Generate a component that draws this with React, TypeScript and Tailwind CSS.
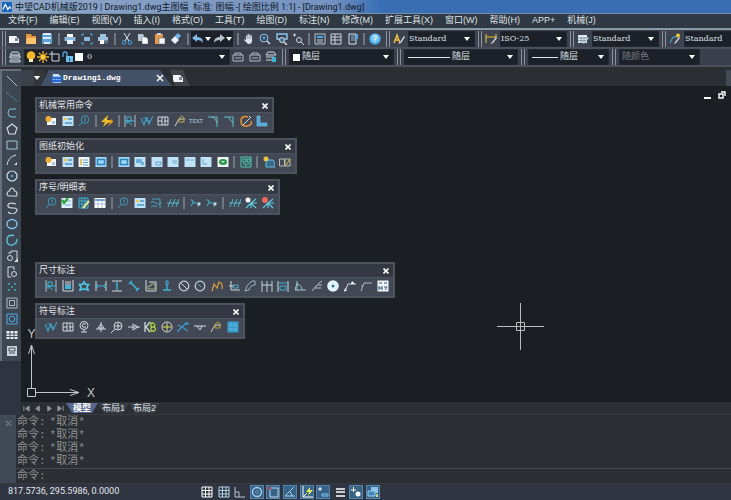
import React from "react";

const W = "#d3d8de";
const C = "#3fb4d6";
const B = "#4fa8e8";
const Y = "#f2c53a";
const L = "#bfe2f8";

const sheet = (inner: React.ReactNode, fill = L) => (
  <>
    <rect x="0.5" y="1" width="11" height="10" fill={fill} />
    {inner}
  </>
);

const icons: Record<string, React.ReactNode> = {
  newFile: (<><path d="M1 3h7l3 3v4H1z" fill="#f2f4f6" /><path d="M7 5h3v3H7z" fill="#7c8694" /></>),
  open: (<><path d="M1 1h5l1 2h4v8H1z" fill="#e79a3c" /><path d="M2 5h9v6H1z" fill="#fbc56f" /></>),
  save: (<><path d="M1 1h10v10H1z" fill="#5e9fd8" /><path d="M2 5h8M2 1h8" stroke="#d9ebf8" strokeWidth="2" /><path d="M3 9h6v2H3z" fill="#d9ebf8" /></>),
  print: (<><path d="M3 1h6v3H3z" fill="#fff" /><path d="M0.500 4h11v4h-11z" fill="#8cb9df" /><path d="M3 7h6v4H3z" fill="#e7f2fb" /></>),
  preview: (<><path d="M1 3V1h2M9 1h2v2M11 9v2H9M3 11H1V9" stroke={B} /><path d="M3 4h6v4H3z" fill="#8cb9df" /></>),
  plot: (<><path d="M3 1h6v3H3zM1 4h10v4H1z" fill="#9cc0de" /><path d="M3 7h4v4H3z" fill="#fff" /><circle cx="9" cy="9" r="2" fill="#5d7487" /></>),
  cut: (<><path d="M3 0l5 8M9 0L4 8" stroke="#d7e6f3" /><circle cx="3" cy="9.500" r="1.800" stroke={B} /><circle cx="9" cy="9.500" r="1.800" stroke={B} /></>),
  copy: (<><path d="M1 1h5l1 2v5H1z" fill="#b9c8d8" /><path d="M5 4h4l2 2v5H5z" fill="#fff" stroke="#52616f" strokeWidth=".5" /></>),
  paste: (<><path d="M1 1h8v10H1z" fill="#e29745" /><path d="M3 0h4v2H3z" fill="#ccd" /><path d="M5 5h6v6H5z" fill="#f3f6fa" stroke="#52616f" strokeWidth=".5" /></>),
  brush: (<><path d="M8 0l3 3-3 3-3-3z" fill="#72b4ef" /><path d="M5 3l4 4-4 4-4-4z" fill="#e6f0fa" /></>),
  undo: (<path d="M0 5l5-4v3c4 0 6 2 6 6-1-2-3-3-6-3v2z" fill="#7fb9e6" />),
  redo: (<path d="M12 5L7 1v3C3 4 1 6 1 10c1-2 3-3 6-3v2z" fill="#b8c0ca" />),
  hand: (<path d="M3 7V3q1-1 1.500 0v3V1.500q1-1 1.500 0V6 2q1-1 1.500 0v4-3q1-1 1.500 0v5q0 3-3 3H5L1 7q0-1 2 0z" fill="#dfe5ec" stroke="#8a96a4" strokeWidth=".4" />),
  zoomRt: (<><circle cx="5" cy="5" r="4" stroke="#8ac4ef" /><path d="M8 8l3 3" stroke={W} strokeWidth="1.500" /><path d="M5 3v4M3 5h4" stroke={B} /></>),
  zoomWin: (<><path d="M1 1h10v5H1z" stroke="#8ac4ef" strokeWidth="1.500" /><circle cx="6" cy="7" r="2.500" stroke={W} fill="#3d6e98" /><path d="M8 9l3 3" stroke={W} strokeWidth="1.500" /></>),
  zoomPrev: (<><circle cx="7" cy="7" r="2.500" stroke={W} /><path d="M9 9l3 3M1 2h3M2.500 0.500v3" stroke={W} /></>),
  props: (<><path d="M1 1h10v10H1z" stroke="#b7c5d3" /><path d="M3 3h6v2H3z" fill={B} /><path d="M3 7h6M3 9h6" stroke="#b7c5d3" /></>),
  design: (<><path d="M1 1h10v10H1zM5 1v10M1 4h10M1 7h10" stroke="#ccd5de" /></>),
  palette: (<><path d="M2 1h7v10H2z" stroke="#d5e3ef" /><path d="M4 3h4M4 5h4M4 7h4" stroke="#7faed4" /><path d="M9 1h2v5H9z" fill={B} /></>),
  help: (<><circle cx="6" cy="6" r="5.800" fill="#49a8e8" /><circle cx="6" cy="5" r="4" fill="#7cc8f5" /><path d="M4.500 4.500q0-1.500 1.500-1.500t1.500 1.300Q7.500 5.500 6 6v1M6 8v1.200" stroke="#fff" /></>),
  textStyle: (<><path d="M1 10l3-8 3 8M2 7h4" stroke={Y} strokeWidth="1.400" /><path d="M11 3l-4 6-2 2 3-1 4-6z" fill={W} /></>),
  dimStyle: (<><path d="M1 1v9M11 1v4M1 4h10" stroke={Y} /><path d="M11 4L7 9l-2 2 3-1 4-5z" fill={W} /></>),
  tableStyle: (<><path d="M1 2h9v8H1z" fill="#dce9f3" /><path d="M1 5h9M1 7.500h9M4 4v6M7 4v6" stroke="#687f91" strokeWidth=".7" /><path d="M12 5L8 10l-2 1 1-2 4-5z" fill="#9ac7e8" /></>),
  leaderStyle: (<><path d="M1 10l3-6h4" stroke={C} /><circle cx="9" cy="2.500" r="2" fill={Y} /><path d="M11 5L7 10l-2 1 1-2 4-5z" fill={W} /></>),
  layers: (<><path d="M3 1h6l2 3H1zM1 5h10v2H1zM1 9h10v2H1z" stroke="#cbd6e0" fill="#4b5665" /></>),
  layerPrev: (<><path d="M1 4h10v6H1z" stroke="#aebbc9" /><path d="M3 4V2h6v2M3 7h6" stroke="#aebbc9" /></>),
  layerState: (<><path d="M3 1h6l2 3H1zM1 6h8M1 9h6" stroke="#cbd6e0" /><path d="M7 6h4v5H7z" fill={C} /></>),
  bulb: (<><circle cx="6" cy="4.500" r="4.300" fill="#f6b52b" /><path d="M4 8h4v3H4z" fill="#fff0bd" /></>),
  sun: (<><path d="M6 0v12M0 6h12M2 2l8 8M10 2l-8 8" stroke="#f4b224" strokeWidth="1.300" /><circle cx="6" cy="6" r="3" fill="#ffcc3f" stroke="#6a5218" strokeWidth=".6" /></>),
  frame: (<><path d="M3 3h7v7H3z" stroke={W} /><path d="M0 3h3V0" stroke={W} /></>),
  lock: (<><path d="M2 6V3q0-2 2-2t2 2v2" stroke={B} strokeWidth="1.300" /><path d="M5 5h7v6H5z" fill="#69c0ee" /><path d="M8 7h1v3H8z" fill="#24435a" /></>),
  line: (<path d="M1 1l10 10" stroke="#a9bccb" />),
  xline: (<path d="M0 1l12 10" stroke="#3f8fa6" strokeDasharray="4 1" />),
  pline: (<path d="M10 2H5Q2 2 2 6t4 4h4" stroke="#7fc9da" />),
  polygon: (<path d="M6 1l5 4-2 6H3L1 5z" stroke={W} strokeWidth="1.200" />),
  rect: (<path d="M1 2h10v8H1z" stroke="#9fc8d6" />),
  arc: (<><path d="M1 11Q2 3 10 1" stroke={W} /><path d="M11 8v3H8z" fill={W} /></>),
  circle: (<><circle cx="6" cy="6" r="5" stroke="#c7e0ec" strokeWidth="1.200" /><circle cx="6" cy="6" r="1.200" fill={C} /></>),
  cloud: (<path d="M3 10Q0 9 1.500 6.500 2 5 3.500 5 4 2 6 2t2.500 3Q11 5 11 8t-3 2z" stroke={W} strokeWidth="1.200" />),
  spline: (<path d="M10 2Q3 0 2 3t5 3 3 4-8 0" stroke={W} strokeWidth="1.200" />),
  ellipse: (<ellipse cx="6" cy="6" rx="5" ry="4.500" stroke="#7fc4ea" strokeWidth="1.400" />),
  ellArc: (<path d="M8 1.500Q1 0 1 6t5 5 5-6" stroke="#5fc1d8" strokeWidth="1.400" />),
  block: (<><path d="M2 3h3V1h6v9" stroke={W} /><circle cx="4" cy="8" r="2.500" stroke={W} /><path d="M12 8v4H8z" fill={W} /></>),
  insert: (<><path d="M2 1h6v3M2 1v10h3" stroke={W} /><circle cx="8" cy="8" r="2.500" stroke={W} /></>),
  point: (<path d="M2 2h2v2H2zM8 2h2v2H8zM5 5h2v2H5zM2 8h2v2H2zM8 8h2v2H8z" fill="#3c9a9e" />),
  hatch: (<><path d="M1 1h10v10H1zM3.500 3.500h5v5h-5z" stroke="#a9b7c4" /></>),
  region: (<><path d="M1 1h10v10H1z" stroke={B} /><circle cx="6" cy="6" r="2.800" stroke={B} /></>),
  table: (<><path d="M0.500 2h11v8h-11z" fill="#edf1f4" /><path d="M0 5h12M0 7.500h12M4 2v8M8 2v8" stroke="#47515f" /></>),
  mtext: (<><path d="M1 1h10v10H1z" fill="#cad4dc" /><path d="M3 3h6v3H3zM3 8h6" stroke="#49545f" /></>),
  sheetNew: (<><path d="M2 3h9v7H2z" fill="#f4f7fb" /><path d="M7 6h3v3H7z" fill="#a4cce8" /><circle cx="3.500" cy="4" r="3" fill="#f0b036" /></>),
  sheetY: sheet(<><path d="M2 3h3v2H2z" fill={Y} /><path d="M6 4h4M3 8h7" stroke="#4a98c7" strokeWidth="1.500" /></>),
  sheetList: sheet(<><path d="M5 4h5M5 6.500h5M5 9h5" stroke="#58a0cc" /><path d="M2 3h2v6H2z" fill="#e4c167" /></>, "#eef5fa"),
  sheetB: sheet(<path d="M2.500 3.500h7v5h-7z" stroke="#2c86bd" strokeWidth="1.500" />, "#9fd6f6"),
  sheetC: sheet(<path d="M2 3h6v4H2zM7 6h3v3H7z" fill="#69b0dc" />),
  sheetD: sheet(<path d="M5 6h5v3H5z" stroke="#5aa3d2" />),
  sheetE: sheet(<path d="M5 5h5M6 7h4" stroke="#70acd2" />),
  sheetF: sheet(<path d="M2 4h4M7 4h3" stroke="#70acd2" />),
  sheetG: sheet(<path d="M3 3v5M3 8h4" stroke="#70acd2" />),
  refresh: (<>{sheet(null, "#eef7f3")}<ellipse cx="6" cy="6" rx="4" ry="3" fill="#299847" /><path d="M4 5h4l-2 2z" fill="#d5eedb" /></>),
  balloon: (<><circle cx="7" cy="4.500" r="3.800" stroke="#3c9bc0" /><path d="M7 2.500v4M4.500 7L1 11" stroke="#3c9bc0" /></>),
  bolt: (<><path d="M7 0L0 7h4l-2 5 8-7H6z" fill="#f6bd28" /><path d="M11 4L6 8h3l-3 4 6-5z" fill="#e39f18" /></>),
  rdim: (<><path d="M1 0v12M11 0v12" stroke={W} strokeWidth=".8" /><path d="M1 6h10M3 9V2h4v4H3l5 4" stroke={C} /></>),
  rough: (<path d="M0 3l3 7 3-8M6 3l2 6 4-8M2 3h4M5 6h5" stroke="#419fc2" strokeWidth="1.200" />),
  fcf: (<path d="M1 2h10v8H1zM5 2v8M1 6h4M8 2v8M7 6h4" stroke={W} />),
  weld: (<><path d="M1 11l4-7h6" stroke={W} /><path d="M5 4q3-6 5 0v3H5z" stroke="#bba938" /></>),
  corner: (<path d="M1 2h9v10M5 2q4 1 5 6" stroke="#67bdd0" />),
  chamfer: (<path d="M1 2h9v10M5 2l5 6" stroke="#67bdd0" />),
  edit: (<><path d="M8 2Q1 0 1 6t6 5 4-5" stroke="#e79532" strokeWidth="1.500" /><path d="M3 10l8-8M9 1l2 2" stroke={W} /></>),
  angleIron: (<path d="M1 1h3v7h7v3H1z" fill="#4eaad8" stroke="#79c9ed" strokeWidth=".6" />),
  assembly: (<path d="M1 1h10v10H1zM3 3h3v3H3zM7 8h3M3 8h3v2M7 3h3v3H7z" stroke="#4dd0b1" />),
  libNew: (<><circle cx="3" cy="3" r="2.500" fill={Y} /><path d="M5 4h5l2 3v4H3V7z" stroke="#69bfe5" fill="#356984" /></>),
  book: (<><path d="M0.500 3h5v7h-5zM6 3h5v7H6z" stroke="#b3bfb5" /><path d="M11 3L7 9" stroke={Y} /></>),
  sheetCheck: (<>{sheet(<path d="M5 4h5M4 8h6" stroke="#6cafdc" />, "#dff0f9")}<path d="M1 3l2 3 4-5" stroke="#2aa83e" strokeWidth="2.500" /></>),
  gridEdit: (<><path d="M1 1h9v10H1zM4 1v10M7 1v10M1 4h9M1 7h9" stroke={C} /><path d="M11 4l-6 7" stroke="#e5ec94" strokeWidth="2" /></>),
  gridWhite: (<>{sheet(<><path d="M1 3h10" stroke="#6e9ed4" strokeWidth="2" /><path d="M4 4v7M8 4v7M1 7h10" stroke="#a7bfda" /></>, "#fff")}</>),
  waves: (<path d="M2 2h8M0 6q3-3 6 0t5-1M1 10q3-3 6 0M10 2v9" stroke="#47a4bd" />),
  hatches: (<path d="M0 6h12M1 10l3-8M5 10l3-8M9 10l3-8" stroke="#55b7ce" />),
  node: (<><path d="M0 3h2l2 3h7M1 9l3-5M8 6v4" stroke="#3fa7bd" strokeWidth="1.200" /><circle cx="9" cy="7" r="1.500" fill={W} /></>),
  spider: (<><path d="M6 6L1 11M6 6l5 5M6 6v5M6 6l5-4M6 6h6" stroke="#5ec8df" strokeWidth="1.200" /><circle cx="3" cy="3" r="2.500" fill="#fff" /></>),
  spiderRed: (<><path d="M6 6L1 11M6 6l5 5M6 6v5M6 6l5-4M6 6h6" stroke="#5ec8df" strokeWidth="1.200" /><circle cx="3" cy="3" r="3" fill="#e76a60" /></>),
  multi: (<><path d="M1 0v11h10V0M3 2h6M3 4h6" stroke={W} /><path d="M3 5h6v4H3z" fill={C} /></>),
  star: (<path d="M6 2l1.500 2.500h3L9 7l1 3-4-1-4 1 1-3-1.500-2.500h3z" stroke="#4cc5ea" strokeWidth="1.700" />),
  hdim: (<><path d="M1 1v10M11 1v10" stroke={W} /><path d="M1 6h10M3 4L1 6l2 2M9 4l2 2-2 2" stroke={C} /></>),
  vdim: (<><path d="M1 1h10M1 11h10" stroke={W} /><path d="M6 2v8" stroke={C} strokeWidth="1.500" /></>),
  adim: (<path d="M1 4l3-3M8 11l3-3M3 3l6 6" stroke={C} strokeWidth="1.600" />),
  stair: (<><path d="M1 0v11h10V2H4" stroke={W} /><path d="M3 9V6h3V4h4v5z" stroke="#a7af83" /></>),
  datumT: (<><path d="M2 10h8M6 5v5" stroke={C} strokeWidth="1.400" /><path d="M5 1h2v4H5z" stroke={C} /></>),
  dia: (<><circle cx="6" cy="6" r="4.800" stroke="#c9d1db" strokeWidth="1.200" /><path d="M3 3l6 6" stroke="#c9d1db" /></>),
  rad: (<><circle cx="6" cy="6" r="4.800" stroke="#c9d1db" strokeWidth="1.200" /><path d="M4 4l3 3" stroke={C} /></>),
  jog: (<path d="M1 11l2-7 3 4 2-6q4 1 3 7" stroke="#dfa044" strokeWidth="1.200" />),
  ord: (<><path d="M3 1v9h9M1 6h5" stroke={W} /><path d="M5 5h5v3H5z" stroke="#58acd0" /></>),
  arcDim: (<path d="M1 11Q2 5 8 1h3v4q-5 0-6 5z" stroke="#93b9c5" />),
  multiH: (<path d="M1 1v11M6 1v11M11 1v11M1 5h10" stroke="#bad5df" />),
  baseDim: (<><path d="M1 1v11M11 1v11" stroke={W} /><path d="M1 3h10M3 6h6v4H3z" stroke={C} /></>),
  ang: (<path d="M3 1v9h9M3 3L1 10h3M3 4q5 1 5 6" stroke="#98c0cd" />),
  leader2: (<path d="M1 11l5-6h5M4 8h6M7 4l4-3" stroke="#b4c2cc" />),
  centre: (<><circle cx="6" cy="6" r="5.800" fill="#e4f5fc" /><circle cx="6" cy="6" r="1.500" fill="#3b7590" /></>),
  leadArrow: (<><path d="M1 11l3-7h8" stroke={W} /><path d="M0 12l1-4 2 2zM8 1l3 3H7z" fill="#fff" /></>),
  leadStep: (<path d="M1 11l3-8h8M1 6h2" stroke="#aeb8c3" />),
  hCheck: (<><rect x="0.5" y="0.5" width="11" height="11" fill="#edf5fb" /><path d="M2 3h3M7 3h3M2 6v4M5 6v4M2 8h3M7 7h3L8 10" stroke="#315675" /></>),
  datum: (<><circle cx="6" cy="4.500" r="4" stroke={W} /><path d="M8 3Q4 2 4 4.500T8 6M6 9v2M3 11h6" stroke={W} /></>),
  triUp: (<path d="M6 1v10M1 8h10M3 7l3-4 3 4z" stroke={W} />),
  target: (<><circle cx="7" cy="5" r="4" stroke={W} /><path d="M7 2v6M4 5h6M4 8l-4 4" stroke={W} /></>),
  arrowR: (<><path d="M0 6h12" stroke={W} /><path d="M5 3l5 3-5 3z" stroke={W} /></>),
  kb: (<><path d="M1 1v10M6 1L2 6l4 5" stroke={W} strokeWidth="1.300" /><path d="M7 2v8h3q3-2 0-4 2-2-1-4zM7 6h3" stroke="#a8d93a" strokeWidth="1.300" /></>),
  cross: (<><circle cx="6" cy="6" r="5" stroke={W} /><path d="M6 2v8M2 6h8" stroke="#d9dd4c" /></>),
  scatter: (<path d="M0 11l5-5 6 4M1 4l4 2 5-5M8 3h4" stroke="#3d9ad1" strokeWidth="1.300" />),
  tri: (<path d="M0 5h12M3 5l3 4 2-4" stroke={W} />),
  lib: (<><path d="M0.500 0.500h11v11h-11z" fill="#379ccc" /><path d="M1 4h10M1 8h10M4 1v10M8 1v10" stroke="#77c5e6" strokeDasharray="1 1" /></>),
  snap: (<path d="M1 1h10v10H1zM1 4.500h10M1 8h10M4.500 1v10M8 1v10" stroke="#fff" />),
  grid: (<path d="M1 1h10v10H1zM1 4.500h10M1 8h10M4.500 1v10M8 1v10" stroke="#b5d4e8" />),
  ortho: (<path d="M1 1v10h10M1 6h4v5" stroke="#bcc5cf" />),
  polar: (<><circle cx="6" cy="6" r="4.500" stroke="#a9cdea" strokeWidth="1.400" /><circle cx="6" cy="6" r="1.500" stroke="#5d90b5" /></>),
  osnap: (<><path d="M3 2h8v9H3z" stroke="#c3d9ea" /><path d="M0 1h4v3H0z" fill="#985064" /></>),
  otrack: (<path d="M10 1L1 10h10M6 6q2 2 2 4" stroke="#a9cdea" />),
  ducs: (<><path d="M2 0v11h10M2 11l4-4" stroke="#fff" /><path d="M9 1L5 6h3l-1 4 5-6H9z" fill="#dde85a" /></>),
  dyn: (<><path d="M1 3h4M3 1v4" stroke="#fff" /><path d="M5 8h6v2H5z" stroke="#80c4ed" /></>),
  lwt: (<path d="M2 3h9M2 6h9M2 10h9" stroke="#fff" strokeWidth="1.600" />),
  cycle: (<><path d="M1 4h5M3.500 1v5" stroke="#fff" /><circle cx="8" cy="8" r="2.500" fill="#fff" /></>),
  model: (<><path d="M4 1h7v6H4z" fill="#91c5e8" /><path d="M1 5h7v5H1z" fill="#3f86b9" stroke="#9bd0ef" /><path d="M9 8h2v3H9z" fill="#d4ca83" /></>),
};

function Icon({ name }: { name: string }) {
  if (name === "text")
    return (
      <svg viewBox="0 0 12 12" className="size-3 shrink-0 overflow-visible" aria-hidden="true">
        <text x="6" y="8" textAnchor="middle" fill="#b9dce2" className="font-['DejaVu_Serif',serif] text-[5px]">TEXT</text>
      </svg>
    );
  return (
    <svg viewBox="0 0 12 12" fill="none" className="size-3 shrink-0" aria-hidden="true">
      {icons[name]}
    </svg>
  );
}

function Tool({ name }: { name: string }) {
  return (
    <button type="button" aria-label={name} className="flex size-3 shrink-0 items-center justify-center">
      <Icon name={name} />
    </button>
  );
}

const Divider = () => <span className="h-3 w-[2px] shrink-0 bg-[#707781]" />;
const Grip = () => <span className="h-4 w-1 shrink-0 border-x border-[#8b929c]" />;

function Tools({ names, className }: { names: string; className: string }) {
  return (
    <div className={`flex shrink-0 items-center justify-between ${className}`}>
      {names.split(" ").map((n, i) => (n === "|" ? <Divider key={i} /> : <Tool key={i} name={n} />))}
    </div>
  );
}

function Caret() {
  return (
    <svg viewBox="0 0 6 4" className="pointer-events-none h-1 w-[6px] shrink-0" aria-hidden="true">
      <path d="M0 0h6L3 4z" fill="#fff" />
    </svg>
  );
}

type DropProps = { label: string; value: string; className: string; selectClass?: string; children?: React.ReactNode };

function Drop({ label, value, className, selectClass = "text-[#dfe2e6]", children }: DropProps) {
  return (
    <label className={`flex h-4 shrink-0 items-center border border-[#22262e] bg-[#1c2029] pr-1 ${className}`}>
      {children}
      <select aria-label={label} className={`h-full min-w-0 flex-1 appearance-none bg-transparent outline-none ${selectClass}`}>
        <option>{value}</option>
      </select>
      <Caret />
    </label>
  );
}

const styleText = "font-['DejaVu_Serif',serif] text-[8px] text-[#dfe2e6]";

function Panel({ title, names, className }: { title: string; names: string; className: string }) {
  return (
    <section className={`border-2 border-[#4b535f] bg-[#424854] ${className}`}>
      <header className="flex h-[13px] items-center justify-between bg-[#333842] pr-1 pl-[2px] text-[9px] text-[#e2e4e7]">
        <h2>{title}</h2>
        <button type="button" aria-label={`关闭 ${title}`} className="flex">
          <svg viewBox="0 0 6 6" className="size-[6px]"><path d="M0.500 0.500l5 5M5.500 0.500l-5 5" stroke="#fff" strokeWidth="1.600" /></svg>
        </button>
      </header>
      <Tools names={names} className="h-[19px] border-t border-[#4b535f] pr-1 pb-[2px] pl-2" />
    </section>
  );
}

const menus = ["文件(F)", "编辑(E)", "视图(V)", "插入(I)", "格式(O)", "工具(T)", "绘图(D)", "标注(N)", "修改(M)", "扩展工具(X)", "窗口(W)", "帮助(H)", "APP+", "机械(J)"];

const drawTools = ["line", "xline", "pline", "polygon", "rect", "arc", "circle", "cloud", "spline", "ellipse", "ellArc", "block", "insert", "point", "hatch", "region", "table", "mtext"];

const statusTools: [string, boolean][] = [
  ["snap", false], ["grid", false], ["ortho", false], ["polar", true], ["osnap", true], ["otrack", true],
  ["ducs", true], ["dyn", true], ["lwt", false], ["cycle", true], ["model", true],
];

const navPaths = ["M1 1v6M7 1L3 4l4 3z", "M6 1L2 4l4 3z", "M2 1l4 3-4 3z", "M1 1l4 3-4 3zM7 1v6"];

export default function App() {
  return (
    <div className="flex min-h-screen flex-col overflow-hidden bg-[#2c2f33] font-['Liberation_Sans','Noto_Sans_CJK_SC',sans-serif] text-[9px] whitespace-nowrap text-[#dfe2e6]">
      <header className="flex h-[14px] items-center gap-[3px] border-b border-[#7790ae] bg-linear-to-r from-[#8fa6c6] via-[#7593c0] via-45% to-[#3a6eb4] to-52% pl-[2px]">
        <svg viewBox="0 0 12 12" className="size-[10px]" aria-hidden="true">
          <rect width="12" height="12" rx="1" fill="#1765bd" /><path d="M1 9l3-6 3 6 2-3 2 2" fill="none" stroke="#fff" strokeWidth="1.500" />
        </svg>
        <h1 className="font-['Roboto','Noto_Sans_CJK_SC',sans-serif] text-[9px] leading-3 text-[#10192b]">中望CAD机械版2019 | Drawing1.dwg主图幅&nbsp; 标准: 图幅:-[ 绘图比例 1:1] - [Drawing1.dwg]</h1>
      </header>

      <nav className="flex h-[14px] items-center gap-3 bg-[#2f3944] pl-2">
        {menus.map((m) => <button type="button" key={m}>{m}</button>)}
      </nav>

      <div className="flex h-[19px] items-center border-t-2 border-[#8c98a3] bg-[#3c424e] pl-[2px]">
        <Grip />
        <Tools names="newFile open save | print preview plot | cut copy paste brush |" className="ml-[2px] w-[181px]" />
        <div className="ml-[2px] flex h-4 w-[42px] shrink-0 items-center justify-between bg-[#1c2029] px-[1px]">
          <Tool name="undo" /><Caret /><Tool name="redo" /><Caret />
        </div>
        <Tools names="| hand zoomRt zoomWin zoomPrev | props design palette | help" className="ml-1 w-[144px]" />
        <div className="ml-[5px] flex min-w-0 flex-1 items-center gap-[3px]">
          <Grip /><Tool name="textStyle" />
          <Drop label="文字样式" value="Standard" className="w-[67px]" selectClass={styleText} />
          <Grip /><Tool name="dimStyle" />
          <Drop label="标注样式" value="ISO-25" className="w-[67px]" selectClass={styleText} />
          <Grip /><Tool name="tableStyle" />
          <Drop label="表格样式" value="Standard" className="w-[67px]" selectClass={styleText} />
          <Grip /><Tool name="leaderStyle" />
          <Drop label="引线样式" value="Standard" className="w-[67px]" selectClass={styleText} />
        </div>
      </div>

      <div className="flex h-5 items-center border-y-2 border-[#4a515d] bg-[#3a404b] pl-[2px]">
        <Grip />
        <div className="mr-[3px] ml-[3px] flex"><Tool name="layers" /></div>
        <Drop label="图层" value="0" className="w-[206px]" selectClass="pl-1 font-['DejaVu_Serif',serif] text-[8px] text-[#dfe2e6]">
          <Icon name="bulb" /><Icon name="sun" /><Icon name="frame" /><Icon name="lock" />
          <span className="ml-[2px] size-2 bg-white" />
        </Drop>
        <Tools names="layerPrev layerPrev layerState" className="ml-[2px] w-[45px]" />
        <div className="ml-[5px] flex items-center gap-[3px]">
          <Grip />
          <Drop label="颜色" value="随层" className="w-[105px] pl-[3px]"><span className="mr-[2px] size-[7px] bg-white" /></Drop>
          <Grip />
          <Drop label="线型" value="随层" className="w-[114px] pl-[3px]"><span className="mr-[2px] h-px w-[42px] bg-[#dfe2e6]" /></Drop>
          <Grip />
          <Drop label="线宽" value="随层" className="w-[81px] pl-[3px]"><span className="mr-[2px] h-px w-[26px] bg-[#dfe2e6]" /></Drop>
          <Grip />
          <Drop label="打印样式" value="随颜色" className="w-[81px] pl-[2px]" selectClass="text-[#777b82]" />
        </div>
      </div>

      <div className="flex flex-1 pt-[2px]">
        <aside className="w-[21px] shrink-0 bg-[#2e3541]">
          <div className="flex h-[292px] flex-col items-center justify-between border-t-2 border-l-2 border-[#66707d] bg-[#3e4652] pt-1 pb-1">
            {drawTools.map((n) => <Tool key={n} name={n} />)}
          </div>
        </aside>

        <div className="flex min-w-0 flex-1 flex-col">
          <div className="flex h-[17px] items-end bg-[#2b2e32]">
            <span className="h-4 w-[13px] bg-[#3c4249]" />
            <button type="button" aria-label="图纸列表" className="flex h-4 w-[11px] items-center bg-[#33373c]"><Caret /></button>
            <div className="-ml-1 flex h-4 w-[131px] items-center bg-[#435168] pl-[10px] [clip-path:polygon(8px_0,119px_0,131px_100%,0_100%)]">
              <svg viewBox="0 0 12 12" className="size-[11px]" aria-hidden="true">
                <path d="M2 1h6l3 3v7H2z" fill="#c8e2fa" /><rect y="4" width="12" height="6" rx="2" fill="#2468cf" /><path d="M2 7h8" stroke="#b9d8ff" strokeDasharray="2 1" />
              </svg>
              <span className="ml-[1px] font-['Liberation_Mono',monospace] text-[8px] font-bold text-white">Drawing1.dwg</span>
              <button type="button" aria-label="关闭图纸" className="mr-2 ml-auto flex">
                <svg viewBox="0 0 8 8" className="size-2"><path d="M1 1l6 6M7 1L1 7" stroke="#fff" strokeWidth="1.500" /></svg>
              </button>
            </div>
            <button type="button" aria-label="新建图纸" className="-ml-[2px] flex h-4 w-5 items-center bg-[#414449] pl-[2px] [clip-path:polygon(0_0,13px_0,100%_100%,5px_100%)]"><Icon name="newFile" /></button>
            <span className="ml-auto h-4 w-[5px] bg-[#454b55]" />
          </div>

          <main className="relative flex flex-1 flex-col items-start gap-[5px] bg-[#1b1f23] pt-[11px] pl-[14px]">
            <svg viewBox="0 0 80 80" className="absolute bottom-0 left-0 size-20" fill="none" stroke="#c3c6c8" aria-label="坐标轴">
              <path d="M10.500 66V23M7.500 32l3-9 3 9M15 70.500h43M49 67.500l9 3-9 3M6.500 66.500h8v8h-8z" />
              <text x="10.500" y="16" textAnchor="middle" fill="#c3c6c8" stroke="none" className="text-[12px]">Y</text>
              <text x="70" y="75" textAnchor="middle" fill="#c3c6c8" stroke="none" className="text-[12px]">X</text>
            </svg>
            <Panel title="机械常用命令" className="relative w-[239px]" names="sheetNew sheetY balloon | bolt | rdim rough fcf weld text corner chamfer edit angleIron" />
            <Panel title="图纸初始化" className="relative w-[262px]" names="sheetNew sheetY sheetList sheetB | sheetB sheetC sheetD sheetE sheetF sheetG refresh | assembly | libNew book" />
            <Panel title="序号/明细表" className="relative w-[245px]" names="balloon sheetCheck gridEdit gridWhite | balloon sheetY waves hatches | node node | hatches spider spiderRed" />
            <Panel title="尺寸标注" className="relative mt-[42px] w-[360px]" names="rdim multi star hdim vdim adim stair datumT dia rad jog ord arcDim multiH baseDim ang leader2 centre leadArrow leadStep hCheck" />
            <Panel title="符号标注" className="relative w-[210px]" names="rough fcf datum triUp target arrowR kb cross scatter tri weld lib" />
            <div className="absolute top-[5px] right-[5px] flex items-center gap-[6px]">
              <button type="button" aria-label="最小化" className="flex h-2 w-2 items-end"><span className="h-[2px] w-[7px] bg-white" /></button>
              <button type="button" aria-label="还原" className="flex">
                <svg viewBox="0 0 8 8" className="size-2" fill="none" stroke="#fff" strokeWidth="1.400"><path d="M1 3h4v4H1zM3 1h4v4" /></svg>
              </button>
            </div>
            <svg viewBox="0 0 48 48" className="absolute top-[216px] left-[476px] size-12" fill="none" stroke="#b9bcbc" aria-label="光标">
              <path d="M0 24.500h47M23.500 1v47M19.500 20.500h8v8h-8z" />
            </svg>
          </main>

          <div className="flex h-[12px] items-center bg-[#2b2e33]">
            <div className="flex w-[43px] justify-between pl-[2px]">
              {navPaths.map((d) => (
                <button type="button" aria-label="布局导航" key={d} className="flex">
                  <svg viewBox="0 0 8 8" className="size-[7px]"><path d={d} fill="#9298a0" stroke="#9298a0" /></svg>
                </button>
              ))}
            </div>
            <button type="button" className="ml-[2px] h-[10px] w-8 bg-[#56688f] text-[9px] leading-[10px] font-bold text-white [clip-path:polygon(0_0,100%_0,26px_100%,6px_100%)]">模型</button>
            <button type="button" className="h-[10px] w-[31px] bg-[#3b3f47] text-[9px] leading-[10px] [clip-path:polygon(0_0,100%_0,25px_100%,6px_100%)]">布局1</button>
            <button type="button" className="h-[10px] w-[31px] bg-[#3b3f47] text-[9px] leading-[10px] [clip-path:polygon(0_0,100%_0,25px_100%,6px_100%)]">布局2</button>
          </div>
        </div>
      </div>

      <section aria-label="命令行" className="flex border-t border-[#373b41] bg-[#2b2e32] font-['Liberation_Mono','Noto_Sans_CJK_SC',monospace] text-[11px] leading-[13px] text-[#8f9193]">
        <div className="w-4 shrink-0 bg-[#414957] pt-[5px] pl-[5px]">
          <button type="button" aria-label="关闭命令行" className="flex">
            <svg viewBox="0 0 8 8" className="size-[7px]"><path d="M1 1l6 6M7 1L1 7" stroke="#747b86" strokeWidth="1.300" /></svg>
          </button>
        </div>
        <div className="flex-1">
          <div className="h-[53px] pt-px pl-px">
            {[0, 1, 2, 3].map((i) => <p key={i} className="flex h-[13px] gap-1"><span>命令:</span><span>*取消*</span></p>)}
          </div>
          <label className="flex h-[15px] items-center gap-1 border-t border-[#474a4f] pl-px">
            命令:<input aria-label="命令" className="min-w-0 flex-1 bg-transparent outline-none" />
          </label>
        </div>
      </section>

      <footer className="flex h-[17px] items-center border-t border-[#353a43] bg-[#2f3642] pl-2">
        <span className="w-[192px] font-['Roboto',sans-serif] text-[9px] text-[#e3e6ea]">817.5736, 295.5986, 0.0000</span>
        <div className="flex w-[180px] justify-between">
          {statusTools.map(([n, on]) => (
            <button type="button" key={n} aria-label={n} aria-pressed={on} className={`flex h-[14px] w-[14px] items-center justify-center ${on ? "border border-[#5585aa] bg-[#376389]" : ""}`}>
              <Icon name={n} />
            </button>
          ))}
        </div>
      </footer>
    </div>
  );
}
